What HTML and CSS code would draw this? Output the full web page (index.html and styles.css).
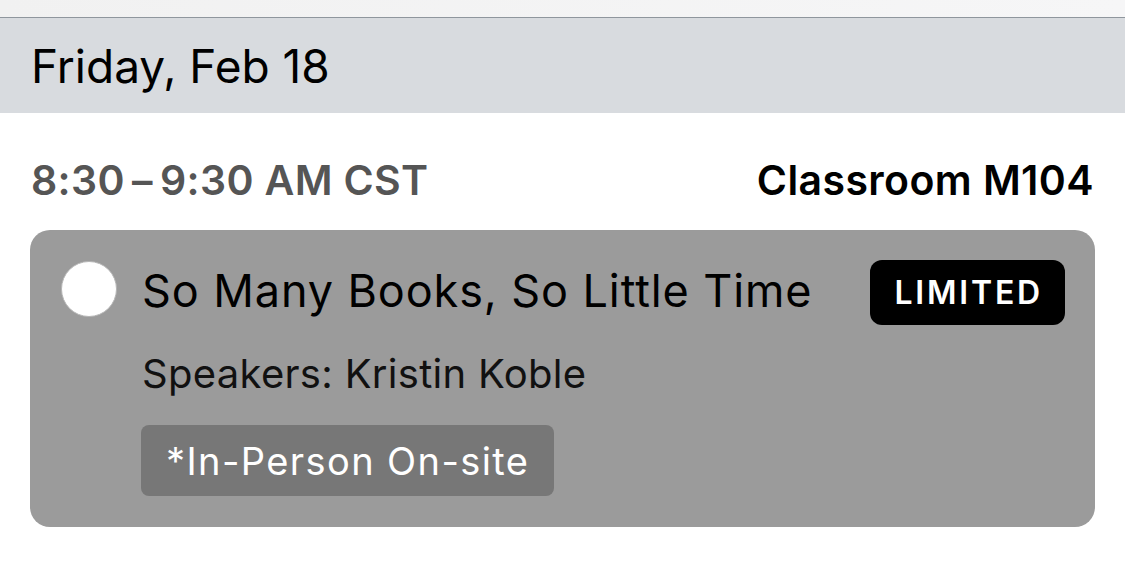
FILE: index.html
```html
<!DOCTYPE html>
<html>
<head>
    <title>Schedule</title>
    <link rel="stylesheet" href="styles.css">
    <meta charset="UTF-8">
    <meta name="viewport" content="width=device-width, initial-scale=1.0">
</head>
<body class="page">
    <div class="top-strip"></div>

    <div class="day-header">Friday, Feb 18</div>

    <div class="session">
        <div class="session-meta">
            <span class="session-time">8:30&thinsp;&ndash;&thinsp;9:30 AM CST</span>
            <span class="session-room">Classroom M104</span>
        </div>

        <div class="session-card">
            <span class="select-dot"></span>
            <div class="card-body">
                <div class="card-title-row">
                    <span class="card-title">So Many Books, So Little Time</span>
                    <span class="badge">LIMITED</span>
                </div>
                <div class="speakers">Speakers: Kristin Koble</div>
                <span class="tag">*In-Person On-site</span>
            </div>
        </div>
    </div>
</body>
</html>
```
FILE: styles.css
```css
.page{
margin: 0;
background: #ffffff;
font-family: Inter, "Noto Sans", sans-serif;
color: #000000;
}

.top-strip{
height: 17px;
background: linear-gradient(90deg, #f1f1f1, #f6f6f7);
border-bottom: 1px solid #8f969d;
}

.day-header{
height: 95px;
display: flex;
align-items: center;
padding-left: 31px;
background: #d8dbdf;
font-size: 46px;
}

.session{
padding: 0 30px;
}

.session-meta{
display: flex;
justify-content: space-between;
align-items: center;
margin-top: 43px;
padding: 0 1px 0 1px;
height: 48px;
font-size: 41px;
font-weight: 600;
}

.session-time{
color: #555555;
letter-spacing: 0.35px;
}

.session-room{
color: #000000;
letter-spacing: 0.4px;
}

.session-card{
display: flex;
align-items: flex-start;
margin-top: 26px;
padding: 30px 30px 31px 31px;
background: #9b9b9b;
border-radius: 20px;
}

.select-dot{
flex: none;
width: 54px;
height: 54px;
margin-top: 1px;
margin-right: 24px;
background: #ffffff;
border: 1px solid #b5b5b5;
border-radius: 50%;
}

.card-body{
flex: 1;
display: flex;
flex-direction: column;
align-items: flex-start;
}

.card-title-row{
align-self: stretch;
display: flex;
justify-content: space-between;
align-items: center;
height: 65px;
}

.card-title{
margin-top: -5px;
padding-left: 1px;
font-size: 45px;
letter-spacing: 0.9px;
color: #000000;
}

.badge{
height: 65px;
display: flex;
align-items: center;
padding: 0 22px 0 24px;
background: #000000;
color: #ffffff;
border-radius: 12px;
font-size: 32px;
font-weight: 600;
letter-spacing: 2.8px;
}

.speakers{
margin-top: 25px;
padding-left: 1px;
line-height: 48px;
font-size: 40px;
letter-spacing: 0.3px;
color: #111111;
}

.tag{
margin-top: 27px;
height: 71px;
display: flex;
align-items: center;
padding: 0 25px;
background: #777777;
color: #ffffff;
border-radius: 8px;
font-size: 38px;
letter-spacing: 1.4px;
}
```
